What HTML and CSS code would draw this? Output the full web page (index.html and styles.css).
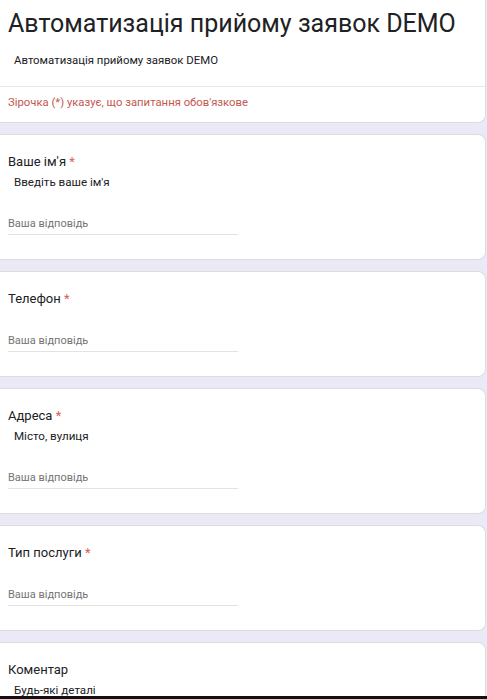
FILE: index.html
```html
<!DOCTYPE html>
<html lang="uk">
<head>
    <meta charset="UTF-8">
    <meta name="viewport" content="width=device-width, initial-scale=1.0">
    <title>Автоматизація прийому заявок DEMO</title>
    <link rel="stylesheet" href="styles.css">
</head>
<body>
    <div class="form-page">
        <div class="card header-card">
            <h1 class="form-title">Автоматизація прийому заявок DEMO</h1>
            <div class="form-desc">Автоматизація прийому заявок DEMO</div>
            <div class="required-note">Зірочка (*) указує, що запитання обов'язкове</div>
        </div>

        <div class="card question">
            <div class="q-label">Ваше ім'я <span class="star">*</span></div>
            <div class="q-help">Введіть ваше ім'я</div>
            <input class="q-input" type="text" placeholder="Ваша відповідь">
        </div>

        <div class="card question">
            <div class="q-label">Телефон <span class="star">*</span></div>
            <input class="q-input" type="tel" placeholder="Ваша відповідь">
        </div>

        <div class="card question">
            <div class="q-label">Адреса <span class="star">*</span></div>
            <div class="q-help">Місто, вулиця</div>
            <input class="q-input" type="text" placeholder="Ваша відповідь">
        </div>

        <div class="card question">
            <div class="q-label">Тип послуги <span class="star">*</span></div>
            <input class="q-input" type="text" placeholder="Ваша відповідь">
        </div>

        <div class="card question">
            <div class="q-label">Коментар</div>
            <div class="q-help">Будь-які деталі</div>
            <input class="q-input" type="text" placeholder="Ваша відповідь">
        </div>
    </div>
    <div class="bottom-edge"></div>
</body>
</html>
```

FILE: styles.css
```css
body {
    margin: 0;
    padding: 0;
    background-color: #eae9f5;
    font-family: Roboto, "Liberation Sans", Arial, sans-serif;
    color: #202124;
    overflow: hidden;
}
.form-page {
    display: flex;
    flex-direction: column;
    gap: 11px;
    width: 486px;
}
.card {
    background: #fff;
    border: 1px solid #dadce0;
    border-left: none;
    border-radius: 0 8px 8px 0;
}
.header-card {
    border-top: none;
    border-radius: 0 0 8px 0;
    padding: 7px 0 9px 8px;
}
.form-title {
    margin: 0;
    font-size: 25px;
    font-weight: 400;
    line-height: 34px;
}
.form-desc {
    margin: 9px 0 0 -8px;
    padding: 0 0 16px 14px;
    font-size: 11.4px;
    line-height: 20px;
    border-bottom: 1px solid #e6e6e6;
}
.required-note {
    margin-top: 6px;
    font-size: 11.3px;
    line-height: 20px;
    color: #c4574f;
}
.question {
    padding: 17px 0 24px 8px;
}
.q-label {
    font-size: 13px;
    line-height: 20px;
}
.star {
    color: #d65f55;
}
.q-help {
    padding-left: 6px;
    font-size: 11.6px;
    line-height: 20px;
}
.q-input {
    display: block;
    margin-top: 21px;
    width: 230px;
    box-sizing: border-box;
    height: 22px;
    padding: 0;
    border: none;
    border-bottom: 1px solid #e3e3e3;
    font-family: inherit;
    font-size: 11px;
    color: #202124;
    outline: none;
}
.q-input::placeholder {
    color: #747474;
}
.bottom-edge {
    position: fixed;
    left: 0;
    right: 0;
    bottom: 0;
    height: 3px;
    background: #111;
}
```
